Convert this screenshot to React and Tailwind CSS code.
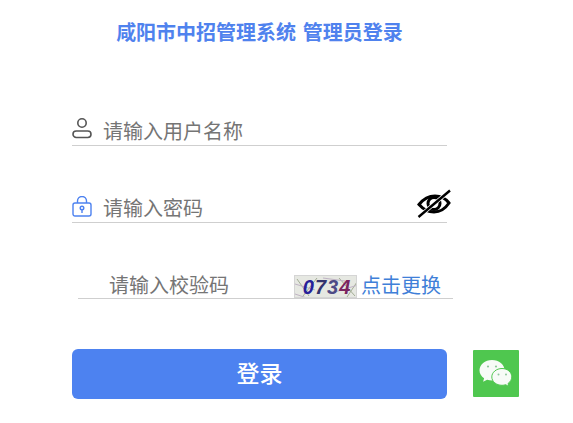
function UserIcon() {
  return (
    <svg width="20" height="21" viewBox="0 0 20 21" fill="none" stroke="#555" strokeWidth="1.6">
      <circle cx="10" cy="5" r="4.2" />
      <rect x="1" y="13" width="18" height="6.5" rx="3.25" />
    </svg>
  );
}

function LockIcon() {
  return (
    <svg width="20" height="21" viewBox="0 0 20 21" fill="none" stroke="#4d82f0" strokeWidth="1.4">
      <path d="M5.500 7V5a4.500 4.500 0 0 1 9 0v2" />
      <rect x="1" y="7" width="18" height="13" rx="2" />
      <circle cx="10" cy="12" r="1.800" />
      <path d="M10 14v3" />
    </svg>
  );
}

function EyeOff() {
  return (
    <svg width="34" height="30" viewBox="0 0 34 30" fill="none" stroke="#000">
      <path d="M2 15.500 C8 8 14 7 18 7 C24 7 29 10 32 14 C28 20 23 23 17 23 C11 23 6 20 2 15.500 Z" strokeWidth="3" />
      <circle cx="17" cy="14.500" r="6" strokeWidth="3" />
      <path d="M1.500 28 L33 1.500" stroke="#fff" strokeWidth="4" />
      <path d="M1.500 28 L33 1.500" strokeWidth="2.400" />
    </svg>
  );
}

function WeChat() {
  return (
    <svg width="34" height="30" viewBox="0 0 34 30">
      <path d="M13 1C6 1 0.500 5.500 0.500 11.300c0 3.300 1.800 6.100 4.600 8l-1 3.500 4-2.100c1.500.4 3.200.7 4.900.7 7 0 12.500-4.600 12.500-10.100C25.500 5.500 20 1 13 1Z" fill="#f7fbf7" />
      <path d="M23 9.500c-5.600 0-10.200 3.800-10.200 8.400 0 4.700 4.600 8.400 10.200 8.400 1.300 0 2.500-.2 3.700-.6l3.100 1.800-.8-3c2.300-1.600 3.800-4 3.800-6.600 0-4.600-4.200-8.400-9.800-8.400Z" fill="#f7fbf7" stroke="#4fc74f" strokeWidth="1" />
      <circle cx="9" cy="7.500" r="1.100" fill="#8fc79a" />
      <circle cx="17" cy="7.500" r="1.100" fill="#8fc79a" />
      <circle cx="19.500" cy="15.500" r="1" fill="#8fc79a" />
      <circle cx="27" cy="15.500" r="1" fill="#8fc79a" />
    </svg>
  );
}

function Captcha() {
  return (
    <div className="relative w-[63px] h-[23px] bg-[#e6e8e2] border border-[#d5d5d5] overflow-hidden flex items-center justify-center">
      <svg className="absolute inset-0" width="63" height="23" fill="none" strokeWidth="1">
        <path d="M2 3 L14 20 M8 20 L22 2 M44 2 L60 20 M52 21 L62 6" stroke="#a3ad95" />
        <path d="M0 8 L20 14 M40 16 L63 9 M28 2 L50 5 M0 18 L12 22" stroke="#bfb3c4" />
      </svg>
      <span className="relative ml-[3px] font-['Liberation_Sans',sans-serif] italic font-bold text-[20px] leading-none tracking-[1px] whitespace-nowrap">
        <span className="text-[#27209a]">0</span>
        <span className="text-[#34346e]">7</span>
        <span className="text-[#4d4a86]">3</span>
        <span className="text-[#7a2460]">4</span>
      </span>
    </div>
  );
}

export default function App() {
  return (
    <div className="w-[573px] h-[423px] bg-white font-['Inter','Noto_Sans_CJK_SC',sans-serif] overflow-hidden">
      <div className="pl-[72px] pt-[21px]">
        <h1 className="w-[375px] text-center text-[20px] leading-[24px] font-bold text-[#4f82ee] whitespace-pre [word-spacing:2px]">咸阳市中招管理系统 管理员登录</h1>

        <div className="mt-[74px] w-[375px] h-[27px] border-b border-[#cfcfcf] flex items-start">
          <span className="mt-[-1px]"><UserIcon /></span>
          <span className="ml-[11px] text-[20px] leading-[26px] text-[#757575]">请输入用户名称</span>
        </div>

        <div className="mt-[46px] w-[375px] h-[31px] border-b border-[#cfcfcf] flex items-end relative">
          <span className="mb-[5px]"><LockIcon /></span>
          <span className="ml-[11px] text-[20px] leading-[26px] text-[#757575]">请输入密码</span>
          <span className="absolute right-[-4px] top-[-3px]"><EyeOff /></span>
        </div>

        <div className="mt-[48px] ml-[6px] w-[375px] h-[28px] border-b border-[#cfcfcf] flex items-center">
          <span className="ml-[31px] mt-[2px] text-[20px] leading-[26px] text-[#757575]">请输入校验码</span>
          <span className="ml-[65px] mt-[4px]"><Captcha /></span>
          <span className="ml-[4px] mt-[2px] text-[20px] leading-[26px] text-[#3f7fd8] whitespace-nowrap">点击更换</span>
        </div>

        <div className="mt-[50px] flex items-start">
          <button className="w-[375px] h-[50px] rounded-[6px] bg-[#4d82f0] text-white text-[23px] leading-[30px] font-medium">登录</button>
          <div className="ml-[26px] mt-[1px] w-[46px] h-[47px] rounded-[1px] bg-[#4fc74f] flex items-center justify-center">
            <WeChat />
          </div>
        </div>
      </div>
    </div>
  );
}
